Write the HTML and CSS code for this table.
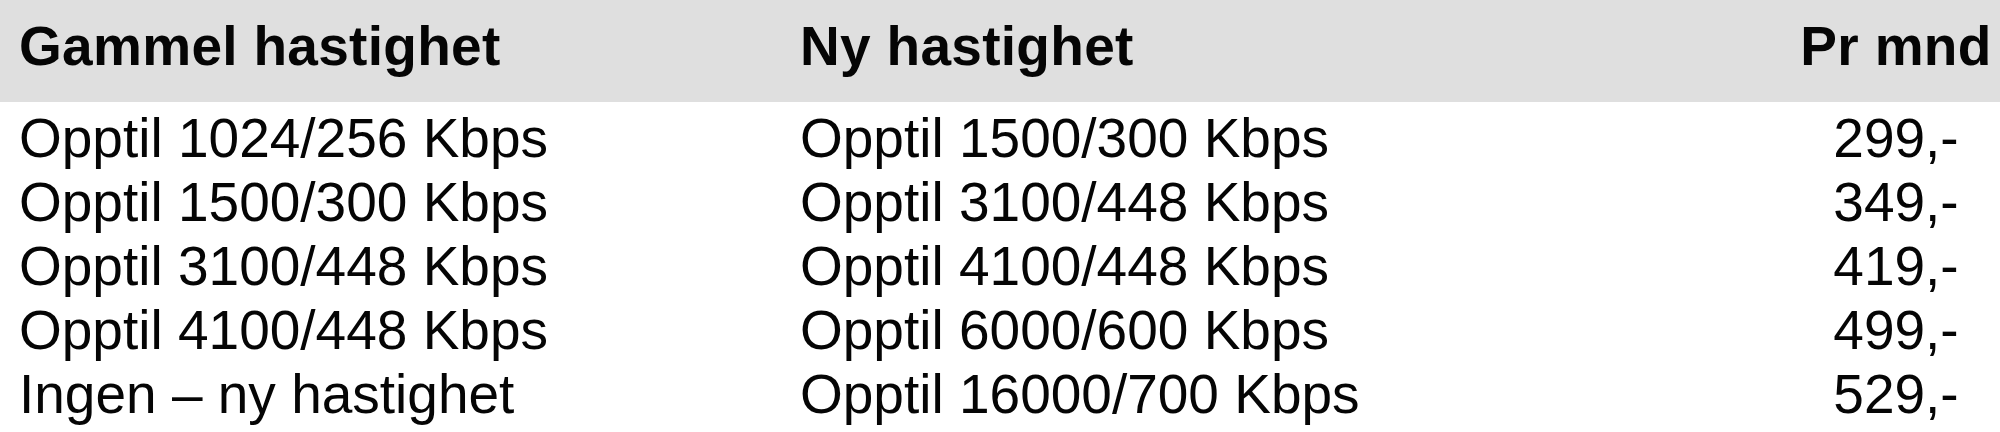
FILE: index.html
```html
<!DOCTYPE html>
<html lang="no">
<head>
<meta charset="utf-8">
<title>Hastigheter</title>
<link rel="stylesheet" href="styles.css">
</head>
<body>
<table class="speed-table">
  <thead>
    <tr>
      <th class="col-old">Gammel hastighet</th>
      <th class="col-new">Ny hastighet</th>
      <th class="col-price">Pr mnd</th>
    </tr>
  </thead>
  <tbody>
    <tr><td class="col-old">Opptil 1024/256 Kbps</td><td class="col-new">Opptil 1500/300 Kbps</td><td class="col-price">299,-</td></tr>
    <tr><td class="col-old">Opptil 1500/300 Kbps</td><td class="col-new">Opptil 3100/448 Kbps</td><td class="col-price">349,-</td></tr>
    <tr><td class="col-old">Opptil 3100/448 Kbps</td><td class="col-new">Opptil 4100/448 Kbps</td><td class="col-price">419,-</td></tr>
    <tr><td class="col-old">Opptil 4100/448 Kbps</td><td class="col-new">Opptil 6000/600 Kbps</td><td class="col-price">499,-</td></tr>
    <tr><td class="col-old">Ingen – ny hastighet</td><td class="col-new">Opptil 16000/700 Kbps</td><td class="col-price">529,-</td></tr>
  </tbody>
</table>
</body>
</html>
```

FILE: styles.css
```css
html, body {
  margin: 0;
  padding: 0;
  background: #ffffff;
}

.speed-table {
  width: 2000px;
  border-collapse: collapse;
  border-spacing: 0;
  table-layout: fixed;
  font-family: "Liberation Sans", Arial, sans-serif;
  font-size: 55px;
  line-height: 64px;
  color: #050505;
}

.speed-table th,
.speed-table td {
  padding: 0;
  white-space: nowrap;
  text-align: left;
  vertical-align: top;
}

.speed-table thead th {
  background: #dfdfdf;
  font-weight: bold;
  letter-spacing: 0.3px;
  padding-top: 14px;
  padding-bottom: 24px;
}

.speed-table tbody tr:first-child td {
  padding-top: 4px;
}

.col-old {
  width: 781px;
  padding-left: 19px !important;
}

.col-new {
  width: 992px;
}

.col-price {
  width: 208px;
  text-align: center !important;
}
```
